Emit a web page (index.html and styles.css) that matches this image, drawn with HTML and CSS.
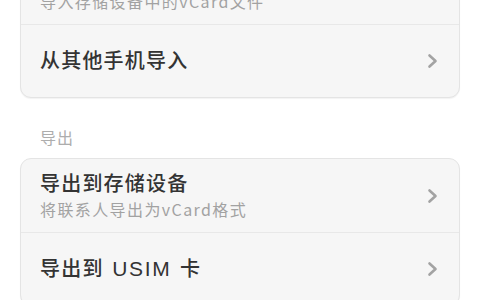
FILE: index.html
```html
<!DOCTYPE html>
<html lang="zh-CN">
<head>
<meta charset="utf-8">
<link rel="stylesheet" href="styles.css">
</head>
<body>
<div class="page">
  <div class="card">
    <div class="row two">
      <div class="texts">
        <div class="title">从存储设备导入</div>
        <div class="sub">导入存储设备中的vCard文件</div>
      </div>
      <svg class="chev" width="12" height="16" viewBox="0 0 12 16"><polyline points="2.5,2.5 8.5,8 2.5,13.5" fill="none" stroke="#a3a3a3" stroke-width="2.6" stroke-linecap="round" stroke-linejoin="round"/></svg>
    </div>
    <div class="row">
      <div class="title">从其他手机导入</div>
      <svg class="chev" width="12" height="16" viewBox="0 0 12 16"><polyline points="2.5,2.5 8.5,8 2.5,13.5" fill="none" stroke="#a3a3a3" stroke-width="2.6" stroke-linecap="round" stroke-linejoin="round"/></svg>
    </div>
  </div>
  <div class="section">导出</div>
  <div class="card">
    <div class="row two">
      <div class="texts">
        <div class="title">导出到存储设备</div>
        <div class="sub">将联系人导出为vCard格式</div>
      </div>
      <svg class="chev" width="12" height="16" viewBox="0 0 12 16"><polyline points="2.5,2.5 8.5,8 2.5,13.5" fill="none" stroke="#a3a3a3" stroke-width="2.6" stroke-linecap="round" stroke-linejoin="round"/></svg>
    </div>
    <div class="row">
      <div class="title">导出到 <span class="latin">USIM</span> 卡</div>
      <svg class="chev" width="12" height="16" viewBox="0 0 12 16"><polyline points="2.5,2.5 8.5,8 2.5,13.5" fill="none" stroke="#a3a3a3" stroke-width="2.6" stroke-linecap="round" stroke-linejoin="round"/></svg>
    </div>
  </div>
</div>
</body>
</html>
```
FILE: styles.css
```css
html, body {
  margin: 0;
  padding: 0;
  background: #ffffff;
  overflow: hidden;
}
body {
  font-family: "Noto Sans CJK SC", "Liberation Sans", sans-serif;
  color: #333333;
}
.page {
  margin-top: -50px;
  padding: 0 20px;
}
.card {
  background: #f6f6f6;
  border: 1px solid #e4e4e4;
  border-radius: 11px;
  box-shadow: 0 1px 1px rgba(0,0,0,0.05);
  overflow: hidden;
}
.row {
  height: 72px;
  display: flex;
  align-items: center;
  justify-content: space-between;
  padding: 0 20px 0 19px;
  border-top: 1px solid #e8e8e8;
}
.row:first-child {
  border-top: none;
}
.row.two {
  height: 73px;
}
.texts {
  display: flex;
  flex-direction: column;
  gap: 3px;
}
.title {
  font-family: "Liberation Sans", "Noto Sans CJK SC", sans-serif;
  font-size: 20px;
  line-height: 24px;
  font-weight: 500;
  color: #333333;
  letter-spacing: 1.2px;
}
.latin {
  font-size: 21px;
  letter-spacing: 1.6px;
  margin: 0 2px;
}
.sub {
  font-size: 16px;
  line-height: 20px;
  color: #a2a2a2;
  letter-spacing: 1.4px;
}
.chev {
  display: block;
}
.section {
  height: 60px;
  box-sizing: border-box;
  padding: 29px 0 0 20px;
  font-size: 16px;
  line-height: 20px;
  color: #adadad;
  letter-spacing: 1px;
}
```
